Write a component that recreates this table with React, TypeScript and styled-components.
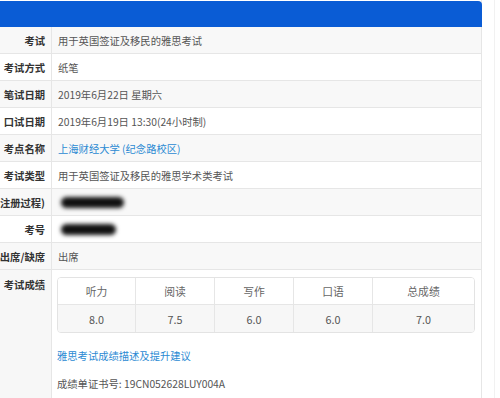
import React from "react";
import styled, { createGlobalStyle } from "styled-components";

const GlobalStyle = createGlobalStyle`
  html, body {
    margin: 0;
    padding: 0;
    background: #fff;
    font-family: "Noto Sans CJK SC", "Noto Sans", sans-serif;
  }
`;

const Page = styled.div`
  display: flex;
  height: 398px;
  overflow: hidden;
`;

const Panel = styled.div`
  width: 481px;
  border-right: 1px solid #e6e6e6;
  flex-shrink: 0;
`;

const Gutter = styled.div`
  width: 12px;
  flex-shrink: 0;
  border-right: 1px solid #f1f1f1;
`;

const Header = styled.div`
  height: 26px;
  margin-top: 1px;
  background: #0a5cd5;
  border-top-right-radius: 4px;
  margin-right: -1px;
`;

const Row = styled.div<{ $striped?: boolean }>`
  display: grid;
  grid-template-columns: 52px 1fr;
  min-height: 26px;
  border-bottom: 1px solid #e6e6e6;
  background: ${(p) => (p.$striped ? "#f8f8f8" : "#fff")};
`;

const Label = styled.div<{ $shaded?: boolean; $top?: boolean }>`
  border-right: 1px solid #e6e6e6;
  display: flex;
  align-items: ${(p) => (p.$top ? "flex-start" : "center")};
  justify-content: flex-end;
  padding: ${(p) => (p.$top ? "7px 6px 0 0" : "0 6px 0 0")};
  font-size: 10.3px;
  font-weight: bold;
  color: #333;
  white-space: nowrap;
  overflow: hidden;
  background: ${(p) => (p.$shaded ? "#f7f7f7" : "transparent")};
`;

const Value = styled.div`
  display: flex;
  align-items: center;
  padding-left: 6px;
  font-size: 10.3px;
  color: #555;
  white-space: nowrap;
`;

const LinkText = styled.a`
  color: #2b8ad3;
  text-decoration: none;
  font-size: 10.3px;
`;

const Redacted = styled.span<{ $w: number }>`
  display: inline-block;
  width: ${(p) => p.$w}px;
  height: 11px;
  border-radius: 6px;
  background: #111;
  filter: blur(2px);
  margin-left: 3px;
`;

const ScoreBlock = styled.div`
  padding: 7px 6px 12px 5px;
  display: flex;
  flex-direction: column;
`;

const ScoreTable = styled.div`
  display: grid;
  grid-template-columns: 78px 79px 79px 79px 1fr;
  border: 1px solid #e3e3e3;
  border-radius: 4px;
  overflow: hidden;
  width: 418px;
  box-sizing: border-box;
`;

const ScoreCell = styled.div<{ $body?: boolean; $last?: boolean }>`
  height: ${(p) => (p.$body ? "27px" : "26px")};
  display: flex;
  align-items: center;
  justify-content: center;
  font-size: 10.8px;
  color: ${(p) => (p.$body ? "#555" : "#666")};
  background: ${(p) => (p.$body ? "#f7f7f7" : "#fff")};
  border-right: ${(p) => (p.$last ? "none" : "1px solid #e6e6e6")};
  border-top: ${(p) => (p.$body ? "1px solid #e6e6e6" : "none")};
`;

const LinkLine = styled.div`
  margin-top: 12px;
  line-height: 16px;
`;

const CertLine = styled.div`
  margin-top: 12px;
  line-height: 16px;
  font-size: 10.3px;
  color: #555;
`;

const rows: { label: string; value: React.ReactNode }[] = [
  { label: "考试", value: "用于英国签证及移民的雅思考试" },
  { label: "考试方式", value: "纸笔" },
  { label: "笔试日期", value: "2019年6月22日 星期六" },
  { label: "口试日期", value: "2019年6月19日 13:30(24小时制)" },
  {
    label: "考点名称",
    value: <LinkText href="#">上海财经大学 (纪念路校区)</LinkText>,
  },
  { label: "考试类型", value: "用于英国签证及移民的雅思学术类考试" },
  { label: "注册过程)", value: <Redacted $w={63} /> },
  { label: "考号", value: <Redacted $w={55} /> },
  { label: "出席/缺席", value: "出席" },
];

const heads = ["听力", "阅读", "写作", "口语", "总成绩"];
const scores = ["8.0", "7.5", "6.0", "6.0", "7.0"];

export default function App() {
  return (
    <>
      <GlobalStyle />
      <Page>
        <Panel>
          <Header />
          {rows.map((r, i) => (
            <Row key={r.label} $striped={i % 2 === 0}>
              <Label>{r.label}</Label>
              <Value>{r.value}</Value>
            </Row>
          ))}
          <Row>
            <Label $shaded $top>
              考试成绩
            </Label>
            <ScoreBlock>
              <ScoreTable>
                {heads.map((h, i) => (
                  <ScoreCell key={h} $last={i === heads.length - 1}>
                    {h}
                  </ScoreCell>
                ))}
                {scores.map((s, i) => (
                  <ScoreCell key={i} $body $last={i === scores.length - 1}>
                    {s}
                  </ScoreCell>
                ))}
              </ScoreTable>
              <LinkLine>
                <LinkText href="#">雅思考试成绩描述及提升建议</LinkText>
              </LinkLine>
              <CertLine>成绩单证书号: 19CN052628LUY004A</CertLine>
            </ScoreBlock>
          </Row>
        </Panel>
        <Gutter />
      </Page>
    </>
  );
}
